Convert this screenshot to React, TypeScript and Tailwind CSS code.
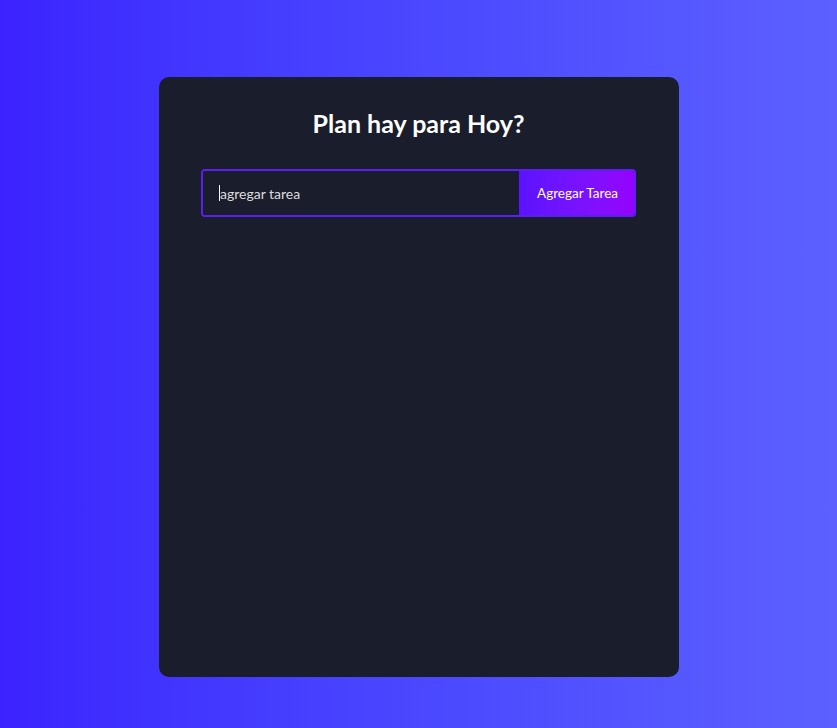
export default function App() {
  return (
    <div
      className="min-h-screen w-full bg-gradient-to-r from-[#3c22ff] to-[#5d60ff] flex justify-center pt-[77px]"
      style={{ fontFamily: '"Trebuchet MS", "Lato", "Noto Sans", sans-serif' }}
    >
      <div className="w-[520px] h-[600px] bg-[#1a1d2b] rounded-[10px] flex flex-col items-center pt-[30px]">
        <h1 className="text-white font-bold text-[25px] leading-[32px]">Plan hay para Hoy?</h1>
        <div className="mt-[30px] w-[435px] h-[48px] flex rounded-[4px] border-2 border-[#5b1ff0] overflow-hidden">
          <div className="flex-1 bg-[#1a1d2b] flex items-center pl-[16px]">
            <span className="w-px h-[16px] bg-white"></span>
            <span className="text-[#dcdcdc] text-[14px]">agregar tarea</span>
          </div>
          <div className="w-[117px] -my-[2px] -mr-[2px] bg-gradient-to-r from-[#5a12ff] to-[#9600ff] flex items-center justify-center text-white text-[13.5px]">
            Agregar Tarea
          </div>
        </div>
      </div>
    </div>
  );
}
